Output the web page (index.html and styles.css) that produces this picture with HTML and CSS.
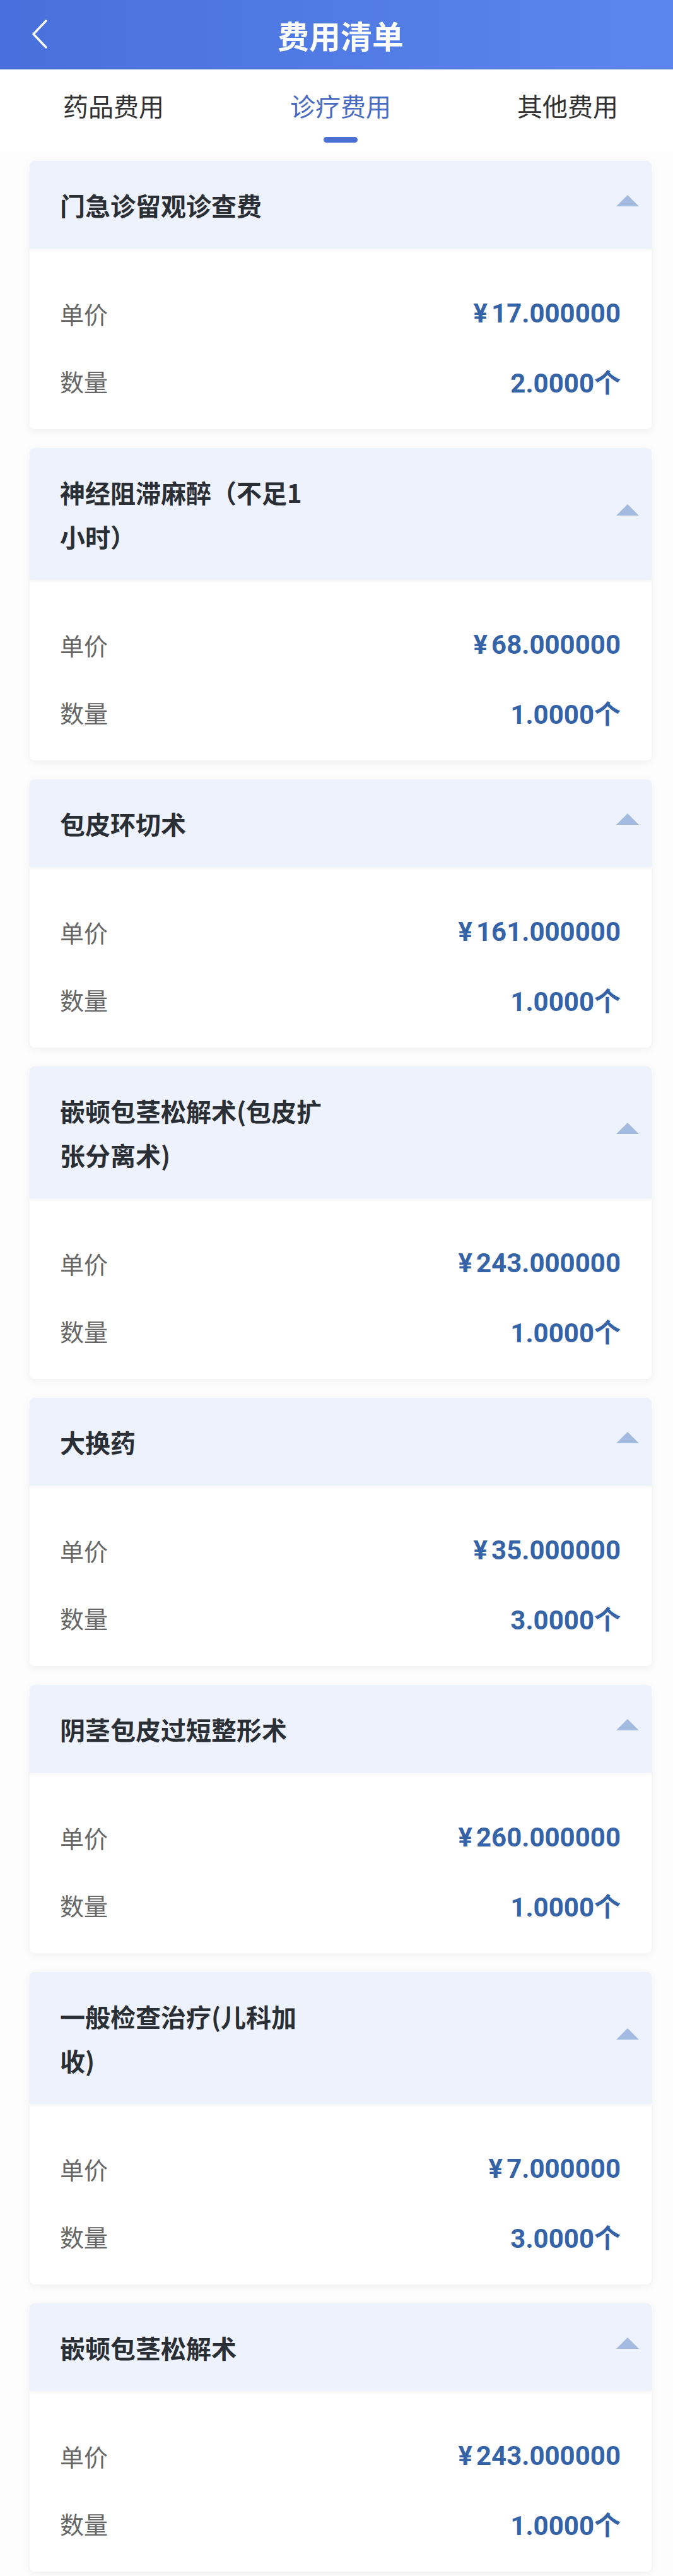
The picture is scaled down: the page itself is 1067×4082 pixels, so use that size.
FILE: index.html
```html
<!DOCTYPE html>
<html lang="zh-CN">
<head>
    <meta charset="UTF-8">
    <title>费用清单</title>
    <link rel="stylesheet" href="styles.css">
</head>
<body>
<div class="page">
    <!-- Nav Bar -->
    <header class="nav-bar">
        <div class="back-button">
            <svg width="26" height="48" viewBox="0 0 26 48">
                <polyline points="23,3 3,24 23,45" fill="none" stroke="#fff" stroke-width="3.5" stroke-linecap="round" stroke-linejoin="round"/>
            </svg>
        </div>
        <h1 class="nav-title">费用清单</h1>
        <div></div>
    </header>

    <!-- Tabs -->
    <nav class="tabs">
        <div class="tab">药品费用</div>
        <div class="tab active">诊疗费用<span class="tab-line"></span></div>
        <div class="tab">其他费用</div>
    </nav>

    <!-- Fee List -->
    <div class="fee-list">
        <div class="fee-card">
            <div class="fee-head">
                <div class="fee-name">门急诊留观诊查费</div>
                <span class="arrow"></span>
            </div>
            <div class="fee-body">
                <div class="fee-row"><span class="label">单价</span><span class="value"><span class="yen">¥</span>17.000000</span></div>
                <div class="fee-row"><span class="label">数量</span><span class="value">2.0000个</span></div>
            </div>
        </div>

        <div class="fee-card">
            <div class="fee-head">
                <div class="fee-name">神经阻滞麻醉（不足1<br>小时）</div>
                <span class="arrow"></span>
            </div>
            <div class="fee-body">
                <div class="fee-row"><span class="label">单价</span><span class="value"><span class="yen">¥</span>68.000000</span></div>
                <div class="fee-row"><span class="label">数量</span><span class="value">1.0000个</span></div>
            </div>
        </div>

        <div class="fee-card">
            <div class="fee-head">
                <div class="fee-name">包皮环切术</div>
                <span class="arrow"></span>
            </div>
            <div class="fee-body">
                <div class="fee-row"><span class="label">单价</span><span class="value"><span class="yen">¥</span>161.000000</span></div>
                <div class="fee-row"><span class="label">数量</span><span class="value">1.0000个</span></div>
            </div>
        </div>

        <div class="fee-card">
            <div class="fee-head">
                <div class="fee-name">嵌顿包茎松解术(包皮扩<br>张分离术)</div>
                <span class="arrow"></span>
            </div>
            <div class="fee-body">
                <div class="fee-row"><span class="label">单价</span><span class="value"><span class="yen">¥</span>243.000000</span></div>
                <div class="fee-row"><span class="label">数量</span><span class="value">1.0000个</span></div>
            </div>
        </div>

        <div class="fee-card">
            <div class="fee-head">
                <div class="fee-name">大换药</div>
                <span class="arrow"></span>
            </div>
            <div class="fee-body">
                <div class="fee-row"><span class="label">单价</span><span class="value"><span class="yen">¥</span>35.000000</span></div>
                <div class="fee-row"><span class="label">数量</span><span class="value">3.0000个</span></div>
            </div>
        </div>

        <div class="fee-card">
            <div class="fee-head">
                <div class="fee-name">阴茎包皮过短整形术</div>
                <span class="arrow"></span>
            </div>
            <div class="fee-body">
                <div class="fee-row"><span class="label">单价</span><span class="value"><span class="yen">¥</span>260.000000</span></div>
                <div class="fee-row"><span class="label">数量</span><span class="value">1.0000个</span></div>
            </div>
        </div>

        <div class="fee-card">
            <div class="fee-head">
                <div class="fee-name">一般检查治疗(儿科加<br>收)</div>
                <span class="arrow"></span>
            </div>
            <div class="fee-body">
                <div class="fee-row"><span class="label">单价</span><span class="value"><span class="yen">¥</span>7.000000</span></div>
                <div class="fee-row"><span class="label">数量</span><span class="value">3.0000个</span></div>
            </div>
        </div>

        <div class="fee-card">
            <div class="fee-head">
                <div class="fee-name">嵌顿包茎松解术</div>
                <span class="arrow"></span>
            </div>
            <div class="fee-body">
                <div class="fee-row"><span class="label">单价</span><span class="value"><span class="yen">¥</span>243.000000</span></div>
                <div class="fee-row"><span class="label">数量</span><span class="value">1.0000个</span></div>
            </div>
        </div>
    </div>
</div>
</body>
</html>
```

FILE: styles.css
```css
/* Basic Styling */
html, body {
    margin: 0;
    overflow-x: hidden;
}

body {
    font-family: "Noto Sans CJK SC", sans-serif;
    background-color: #fdfdfe;
}

.page {
    width: 1080px;
}

/* Nav bar */
.nav-bar {
    height: 110px;
    background: linear-gradient(90deg, #4870dc, #5b87ec);
    display: grid;
    grid-template-columns: 1fr auto 1fr;
    align-items: center;
}

.back-button {
    padding-left: 50px;
    height: 48px;
    margin-top: -2px;
}

.nav-title {
    margin: 0;
    font-size: 50px;
    font-weight: 700;
    color: white;
    line-height: 110px;
}

/* Tabs */
.tabs {
    display: grid;
    grid-template-columns: repeat(3, 1fr);
    height: 130px;
    background-color: white;
}

.tab {
    display: flex;
    flex-direction: column;
    align-items: center;
    padding-top: 29px;
    font-size: 40px;
    line-height: 56px;
    color: #333;
}

.tab.active {
    color: #4a6bc2;
}

.tab-line {
    width: 54px;
    height: 9px;
    margin-top: 22px;
    border-radius: 5px;
    background-color: #4a70d6;
}

/* Fee cards */
.fee-list {
    padding: 15px 47px 10px;
    display: flex;
    flex-direction: column;
    gap: 30px;
}

.fee-card {
    background-color: white;
    border-radius: 8px;
    overflow: hidden;
    box-shadow: 0 3px 14px rgba(0, 0, 0, 0.06);
}

.fee-head {
    position: relative;
    display: flex;
    align-items: center;
    justify-content: space-between;
    padding: 35px 20px 34px 48px;
    background-color: #eef2fc;
    box-shadow: 0 3px 4px rgba(0, 0, 0, 0.04);
}

.fee-name {
    font-size: 40px;
    font-weight: 700;
    line-height: 70px;
    color: #2a2e35;
}

.arrow {
    width: 0;
    height: 0;
    border-left: 18px solid transparent;
    border-right: 18px solid transparent;
    border-bottom: 18px solid #a3bbe0;
    margin-bottom: 14px;
}

.fee-body {
    display: flex;
    flex-direction: column;
    gap: 47px;
    padding: 72px 49px 47px 48px;
}

.fee-row {
    display: flex;
    justify-content: space-between;
    align-items: center;
    height: 60px;
}

.label {
    font-size: 38px;
    color: #666;
}

.value {
    font-family: Roboto, "Noto Sans CJK SC", sans-serif;
    font-size: 42px;
    font-weight: 700;
    color: #3563a8;
}

.yen {
    margin-right: 6px;
}
```
